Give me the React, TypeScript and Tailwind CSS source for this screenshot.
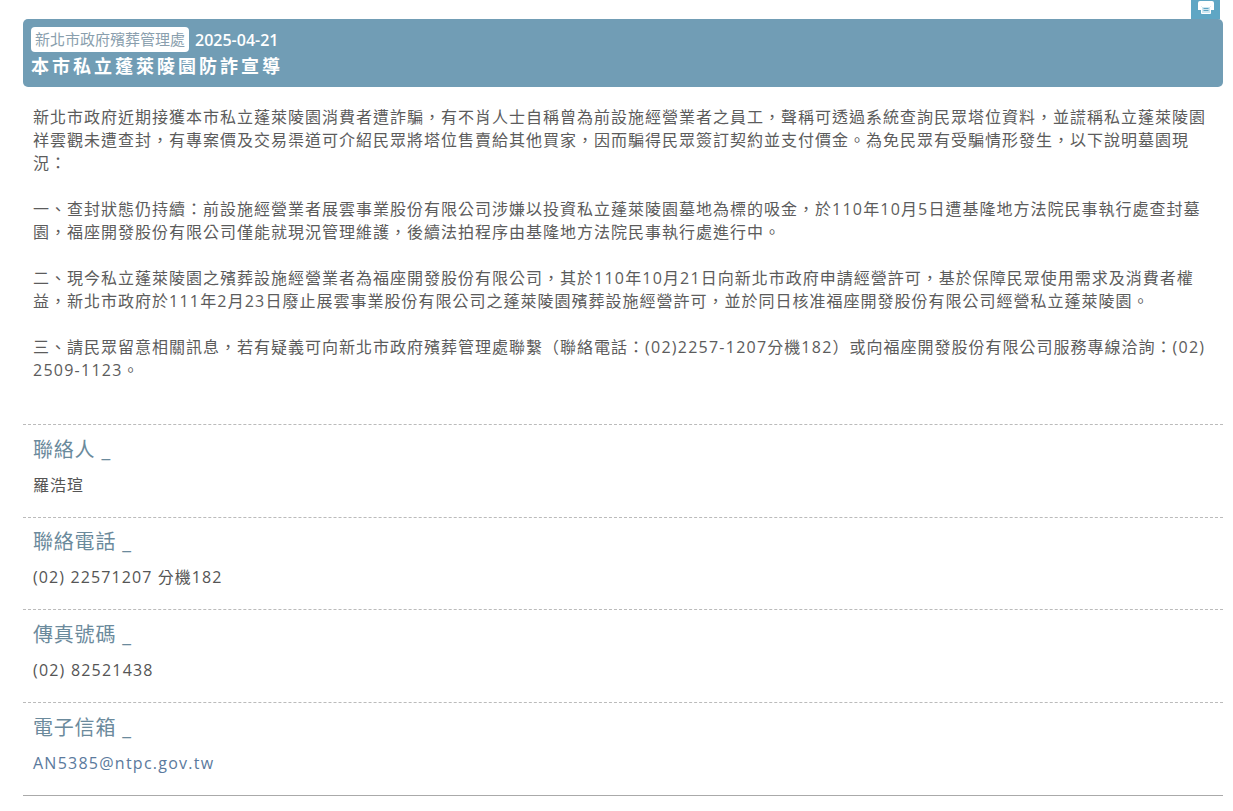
import { Fragment } from 'react'

const font = "font-['Open_Sans','Noto_Sans_CJK_TC',sans-serif]"

const contacts = [
  { label: '聯絡人', value: '羅浩瑄', className: 'tracking-[1px] text-[#555]' },
  { label: '聯絡電話', value: '(02) 22571207 分機182', className: 'tracking-[1.1px] text-[#555]' },
  { label: '傳真號碼', value: '(02) 82521438', className: 'tracking-[1.2px] text-[#555]' },
  { label: '電子信箱', value: 'AN5385@ntpc.gov.tw', className: 'tracking-[1.25px] text-[#5b7a9d]' },
]

const paragraphs = [
  '新北市政府近期接獲本市私立蓬萊陵園消費者遭詐騙，有不肖人士自稱曾為前設施經營業者之員工，聲稱可透過系統查詢民眾塔位資料，並謊稱私立蓬萊陵園祥雲觀未遭查封，有專案價及交易渠道可介紹民眾將塔位售賣給其他買家，因而騙得民眾簽訂契約並支付價金。為免民眾有受騙情形發生，以下說明墓園現況：',
  '一、查封狀態仍持續：前設施經營業者展雲事業股份有限公司涉嫌以投資私立蓬萊陵園墓地為標的吸金，於110年10月5日遭基隆地方法院民事執行處查封墓園，福座開發股份有限公司僅能就現況管理維護，後續法拍程序由基隆地方法院民事執行處進行中。',
  '二、現今私立蓬萊陵園之殯葬設施經營業者為福座開發股份有限公司，其於110年10月21日向新北市政府申請經營許可，基於保障民眾使用需求及消費者權益，新北市政府於111年2月23日廢止展雲事業股份有限公司之蓬萊陵園殯葬設施經營許可，並於同日核准福座開發股份有限公司經營私立蓬萊陵園。',
  '三、請民眾留意相關訊息，若有疑義可向新北市政府殯葬管理處聯繫（聯絡電話：(02)2257-1207分機182）或向福座開發股份有限公司服務專線洽詢：(02) 2509-1123。',
]

// digits run a little wider than the CJK text around them
function Para({ text }: { text: string }) {
  const parts = text.split(/([0-9()\- ]+)/)
  return (
    <p>
      {parts.map((t, i) =>
        i % 2 === 1 ? <span key={i} className="tracking-[1.25px]">{t}</span> : <Fragment key={i}>{t}</Fragment>
      )}
    </p>
  )
}

function PrintIcon() {
  return (
    <svg width="16" height="13" viewBox="0 0 16 13" className="block">
      <path d="M2 0h12a2 2 0 0 1 2 2v7h-3V5H3v4H0V2a2 2 0 0 1 2-2z" fill="#fff" />
      <path d="M3.5 5.5h9v7h-9z" fill="#cfe6f0" stroke="#fff" />
      <path d="M5.5 7.5h5M5.5 9.5h5" stroke="#5fa6c4" strokeWidth="1" />
    </svg>
  )
}

export default function App() {
  return (
    <div lang="zh-TW" className={`w-[1233px] h-[811px] overflow-hidden bg-white ${font}`}>
      <div className="ml-[23px] w-[1200px]">
        <div className="flex justify-end pr-[3px]">
          <button className="flex justify-center w-[29px] h-[19px] pt-px bg-[#5fa6c4]">
            <PrintIcon />
          </button>
        </div>

        <div className="h-[68px] rounded-[5px] bg-[#719db5] px-2 pt-2 text-white">
          <div className="flex items-center gap-1.5 h-[25px]">
            <span className="rounded bg-white px-1 h-[25px] leading-[25px] text-[15px] text-[#8a9fae]">新北市政府殯葬管理處</span>
            <span className="text-base font-semibold">2025-04-21</span>
          </div>
          <h1 className="mt-px text-lg leading-[26px] font-bold tracking-[3px]">本市私立蓬萊陵園防詐宣導</h1>
        </div>

        <div className="mt-[19px] px-[10px] text-base leading-[23px] tracking-[1px] text-[#5c5c5c]">
          {paragraphs.map((p, i) => (
            <Fragment key={i}>
              <Para text={p} />
              {i < paragraphs.length - 1 && <p className="h-[23px]" />}
            </Fragment>
          ))}
        </div>

        <div className="mt-[42px]">
          {contacts.map((c) => (
            <div key={c.label} className="h-[92.7px] border-t border-dashed border-[#bbb] px-[10px] pt-[10.6px]">
              <div className="text-xl leading-[28px] tracking-[0.8px] text-[#6b8a9c]">{c.label} _</div>
              <div className={`mt-[9px] text-base leading-[24px] ${c.className}`}>{c.value}</div>
            </div>
          ))}
          <div className="border-t border-[#aaa]" />
        </div>
      </div>
    </div>
  )
}
